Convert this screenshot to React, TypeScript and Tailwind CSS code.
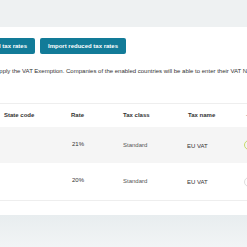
import React from 'react'

const rows = [
    { rate: '21%', taxClass: 'Standard', name: 'EU VAT', active: true },
    { rate: '20%', taxClass: 'Standard', name: 'EU VAT', active: false },
]

const App = () => {
    return (
        <div className="w-[247px] h-[247px] overflow-hidden bg-white text-[#333] font-['Liberation_Sans',Arial,sans-serif]">
            <div className="h-[27px] bg-[#eef1f2]" />

            <div className="-ml-[53px] w-[420px]">
                <div className="mt-[11px] flex gap-[5px]">
                    <button className="h-[16px] w-[88px] rounded-[2px] bg-[#127b98] text-[6px] font-bold text-white">
                        Import standard tax rates
                    </button>
                    <button className="h-[16px] w-[86px] rounded-[2px] bg-[#127b98] text-[6px] font-bold text-white">
                        Import reduced tax rates
                    </button>
                </div>

                <p className="mt-[13px] ml-[49px] text-[6px] leading-[8px] whitespace-nowrap">
                    apply the VAT Exemption. Companies of the enabled countries will be able to enter their VAT Number.
                </p>

                <div className="mt-[28px] border-t border-[#eeeeee]">
                    <div className="flex h-[23px] items-center text-[6px] font-bold">
                        <div className="w-[53px]">Country</div>
                        <div className="w-[67px] pl-[4px]">State code</div>
                        <div className="w-[52px] pl-[4px]">Rate</div>
                        <div className="w-[65px] pl-[4px]">Tax class</div>
                        <div className="w-[57px] pl-[4px]">Tax name</div>
                        <div className="pl-[5px] text-[#999]">-</div>
                    </div>
                    {rows.map((r, i) => (
                        <div
                            key={i}
                            className={`flex items-center text-[6px] ${i === 0 ? 'h-[36px] bg-[#f5f5f5]' : 'h-[38px] bg-white border-b border-[#eeeeee]'}`}
                        >
                            <div className="w-[53px]" />
                            <div className="w-[67px]" />
                            <div className="w-[52px] pl-[5px] -mt-[2px]">{r.rate}</div>
                            <div className="w-[65px] pl-[4px] text-[#555]">{r.taxClass}</div>
                            <div className="w-[57px] pl-[3px] mt-[2px]">{r.name}</div>
                            <div className="pl-[3px]">
                                <div className={`h-[10px] w-[10px] rounded-full border ${r.active ? 'border-[#c8d96a]' : 'border-[#dddddd]'}`} />
                            </div>
                        </div>
                    ))}
                </div>
            </div>

            <div className="mt-[14px] h-[40px] bg-gradient-to-b from-[#e8edef] to-[#f4f6f7]" />
        </div>
    )
}

export default App
